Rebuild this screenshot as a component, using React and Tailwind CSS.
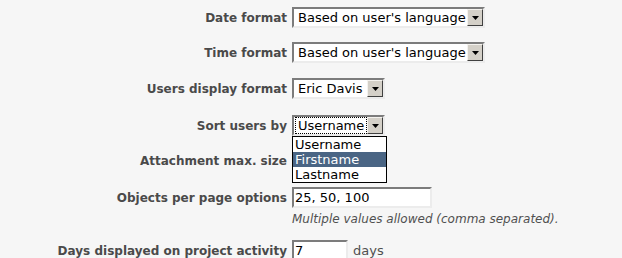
const FONT = { fontFamily: '"DejaVu Sans", Verdana, sans-serif' }

function Arrow() {
  return (
    <div className="flex h-[17px] w-[16px] shrink-0 items-center justify-center border border-t-[#f4f2ee] border-l-[#f4f2ee] border-b-[#404040] border-r-[#404040] bg-[#d4d0c8]">
      <svg width="7" height="4" viewBox="0 0 7 4">
        <path d="M0 0h7L3.5 4z" fill="#000" />
      </svg>
    </div>
  )
}

function Select({ value, width, focused }) {
  return (
    <div
      className={`flex h-[21px] items-center border-2 border-t-[#7c7c7c] border-l-[#7c7c7c] border-b-[#ececec] border-r-[#ececec] bg-white ${width}`}
    >
      <div className="flex min-w-0 flex-1 items-center pl-[2px]">
        <span
          className={`whitespace-nowrap px-[2px] text-[13px] leading-[15px] text-black ${focused ? 'outline outline-1 outline-dotted outline-black' : ''}`}
        >
          {value}
        </span>
      </div>
      <Arrow />
    </div>
  )
}

function Input({ value, width }) {
  return (
    <div
      className={`flex h-[21px] items-center border-2 border-t-[#7c7c7c] border-l-[#7c7c7c] border-b-[#ececec] border-r-[#ececec] bg-white pl-[1px] text-[13px] text-black ${width}`}
    >
      {value}
    </div>
  )
}

function Row({ label, height, children }) {
  return (
    <div className={`flex items-start ${height}`}>
      <div className="flex h-[21px] w-[287px] shrink-0 items-center justify-end text-[12px] font-bold text-[#4a4a4a]">
        {label}
      </div>
      <div className="ml-[5px] flex items-center">{children}</div>
    </div>
  )
}

export default function App() {
  return (
    <div className="h-[258px] w-[622px] overflow-hidden bg-[#f6f6f6] pt-[7px]" style={FONT}>
      <Row label="Date format" height="h-[35px]">
        <Select value="Based on user's language" width="w-[193px]" />
      </Row>
      <Row label="Time format" height="h-[36px]">
        <Select value="Based on user's language" width="w-[193px]" />
      </Row>
      <Row label="Users display format" height="h-[37px]">
        <Select value="Eric Davis" width="w-[93px]" />
      </Row>
      <Row label="Sort users by" height="h-[35px]">
        <div className="relative z-10">
          <Select value="Username" width="w-[93px]" focused />
          <div className="absolute left-0 top-[21px] w-[95px] border border-black bg-white text-[13px] leading-[15px] text-black">
            <div className="h-[15px] pl-[2px]">Username</div>
            <div className="h-[15px] bg-[#4a6584] pl-[2px] text-white">Firstname</div>
            <div className="h-[15px] pl-[2px]">Lastname</div>
          </div>
        </div>
      </Row>
      <Row label="Attachment max. size" height="h-[37px]">
        <Input value="" width="w-[56px]" />
      </Row>
      <div className="flex h-[53px] items-start">
        <div className="flex h-[21px] w-[287px] shrink-0 items-center justify-end text-[12px] font-bold text-[#4a4a4a]">
          Objects per page options
        </div>
        <div className="ml-[5px] flex flex-col">
          <Input value="25, 50, 100" width="w-[140px]" />
          <em className="mt-[2px] text-[12px] text-[#505050]">Multiple values allowed (comma separated).</em>
        </div>
      </div>
      <Row label="Days displayed on project activity" height="h-[21px]">
        <Input value="7" width="w-[56px]" />
        <span className="ml-[5px] text-[13px] text-[#505050]">days</span>
      </Row>
    </div>
  )
}
